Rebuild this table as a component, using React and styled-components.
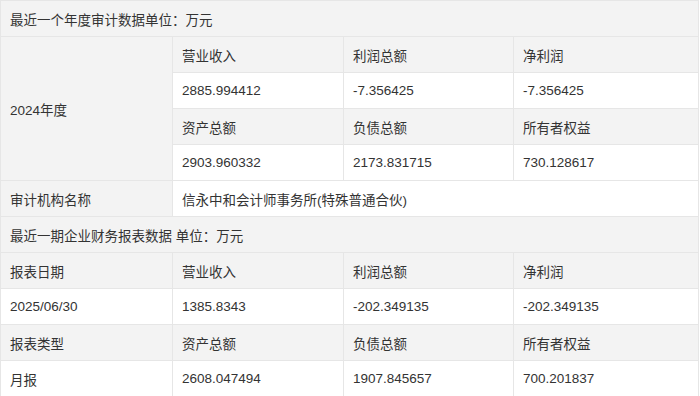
import { Fragment } from "react";
import styled, { createGlobalStyle } from "styled-components";

const GlobalStyle = createGlobalStyle`
  html, body {
    margin: 0;
    padding: 0;
    background: #fff;
  }
  body {
    font-family: "Liberation Sans", "Noto Sans CJK SC", sans-serif;
    color: #333;
  }
`;

const audited = {
  year: "2024年度",
  heads: [
    ["营业收入", "利润总额", "净利润"],
    ["资产总额", "负债总额", "所有者权益"],
  ],
  values: [
    ["2885.994412", "-7.356425", "-7.356425"],
    ["2903.960332", "2173.831715", "730.128617"],
  ],
  auditor: "信永中和会计师事务所(特殊普通合伙)",
};

const latest = [
  { head: ["报表日期", "营业收入", "利润总额", "净利润"], row: ["2025/06/30", "1385.8343", "-202.349135", "-202.349135"] },
  { head: ["报表类型", "资产总额", "负债总额", "所有者权益"], row: ["月报", "2608.047494", "1907.845657", "700.201837"] },
];

const App = () => {
  return (
    <Page>
      <GlobalStyle />
      <Table>
        <colgroup>
          <Col $w={172} />
          <Col $w={171} />
          <Col $w={170} />
          <Col $w={185} />
        </colgroup>
        <tbody>
          <Row>
            <Cell $gray colSpan={4}>最近一个年度审计数据单位：万元</Cell>
          </Row>
          {audited.heads.map((head, i) => (
            <Fragment key={i}>
              <Row>
                {i === 0 && (
                  <Cell $gray rowSpan={4}>
                    {audited.year}
                  </Cell>
                )}
                {head.map((t) => (
                  <Cell $gray key={t}>{t}</Cell>
                ))}
              </Row>
              <Row>
                {audited.values[i].map((t, j) => (
                  <Cell key={j}>{t}</Cell>
                ))}
              </Row>
            </Fragment>
          ))}
          <Row>
            <Cell $gray>审计机构名称</Cell>
            <Cell colSpan={3}>{audited.auditor}</Cell>
          </Row>
          <Row>
            <Cell $gray colSpan={4}>最近一期企业财务报表数据 单位：万元</Cell>
          </Row>
          {latest.map((block, i) => (
            <Fragment key={i}>
              <Row>
                {block.head.map((t) => (
                  <Cell $gray key={t}>{t}</Cell>
                ))}
              </Row>
              <Row>
                {block.row.map((t, j) => (
                  <Cell key={j}>{t}</Cell>
                ))}
              </Row>
            </Fragment>
          ))}
        </tbody>
      </Table>
    </Page>
  );
};
export default App;

const Page = styled.div`
  width: 700px;
  height: 396px;
  overflow: hidden;
  background: #fff;
`;

const Table = styled.table`
  border-collapse: collapse;
  table-layout: fixed;
  width: 699px;
  font-size: 13.5px;
  border: 1px solid #e6e6e6;
`;

const Col = styled.col`
  width: ${(p) => p.$w}px;
`;

const Row = styled.tr`
  height: 36px;
`;

const Cell = styled.td`
  border: 1px solid #e6e6e6;
  padding: 0 9px;
  height: 35px;
  vertical-align: middle;
  white-space: nowrap;
  background: ${(p) => (p.$gray ? "#f3f3f3" : "#fff")};
`;
